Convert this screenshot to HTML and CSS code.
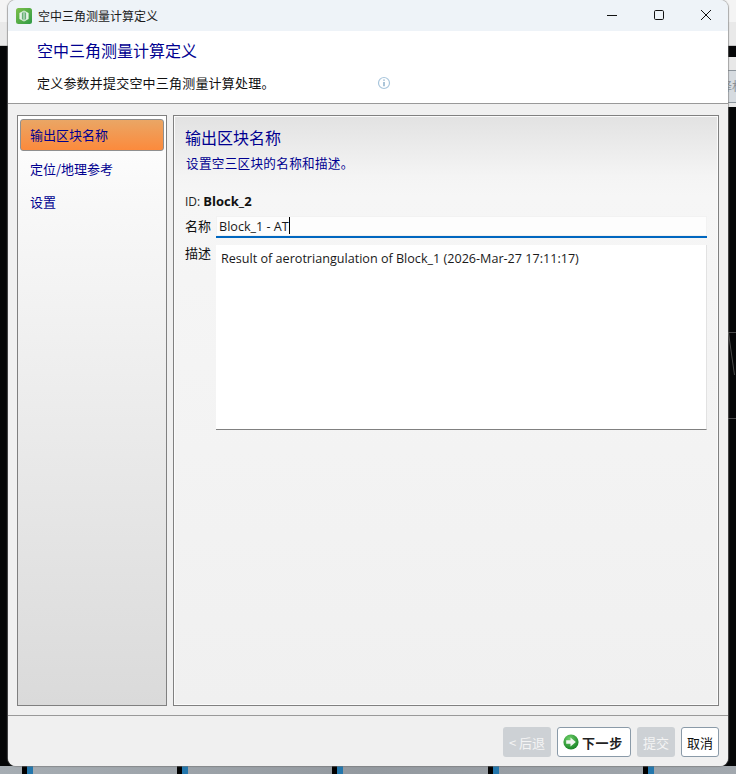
FILE: index.html
```html
<!DOCTYPE html>
<html lang="zh">
<head>
<meta charset="utf-8">
<title>空中三角测量计算定义</title>
<link rel="stylesheet" href="styles.css">
</head>
<body>
<div class="desk-top"></div>
<div class="desk-strip"></div>
<div class="desk-chip"><span>择材</span></div>
<svg class="desk-lines" viewBox="0 0 8 90" aria-hidden="true">
  <path d="M0 .5h8M.5 1 6.5 43M0 86.5h8" stroke="#4a4a4a" stroke-width="1" fill="none"/>
</svg>
<div class="desk-bottom">
  <i class="tick t1"></i><i class="tick t2"></i><i class="tick t3"></i><i class="tick t4"></i><i class="tick t5"></i>
</div>
<main class="window">
  <header class="titlebar">
    <svg class="app-icon" viewBox="0 0 16 16" aria-hidden="true">
      <defs><linearGradient id="g" x1="0" y1="0" x2="1" y2="1"><stop offset="0" stop-color="#7cc04a"/><stop offset="1" stop-color="#2f9a46"/></linearGradient></defs>
      <rect width="16" height="16" rx="2.5" fill="url(#g)"/>
      <path d="M8 2.4 12.6 5v6L8 13.6 3.4 11V5z" fill="#e6f2e6"/>
      <path d="M6.4 4.5v7M9.6 4.5v7M8 3.5v9" stroke="#5aa86a" stroke-width="1" fill="none"/>
    </svg>
    <span class="title-text">空中三角测量计算定义</span>
    <div class="win-controls">
      <svg viewBox="0 0 12 12" class="wc"><path d="M1 6.5h10" stroke="#111" stroke-width="1" fill="none"/></svg>
      <svg viewBox="0 0 12 12" class="wc"><rect x="1.5" y="1.5" width="9" height="9" rx="1.2" stroke="#111" stroke-width="1" fill="none"/></svg>
      <svg viewBox="0 0 12 12" class="wc"><path d="M1 1l10 10M11 1 1 11" stroke="#111" stroke-width="1" fill="none"/></svg>
    </div>
  </header>
  <section class="banner">
    <h1 class="banner-title">空中三角测量计算定义</h1>
    <div class="banner-row">
      <p class="banner-sub">定义参数并提交空中三角测量计算处理。</p>
      <svg class="info" viewBox="0 0 14 14" aria-hidden="true">
        <circle cx="7" cy="7" r="5.5" fill="#fff" stroke="#a9c6dc" stroke-width="1.2"/>
        <path d="M7 6v4.2M7 3.6v1.2" stroke="#7fa6c4" stroke-width="1.3"/>
      </svg>
    </div>
  </section>
  <section class="content">
    <nav class="side">
      <a class="side-item active">输出区块名称</a>
      <a class="side-item">定位/地理参考</a>
      <a class="side-item">设置</a>
    </nav>
    <div class="panel">
      <div class="panel-head">
        <h2 class="panel-title">输出区块名称</h2>
        <p class="panel-sub">设置空三区块的名称和描述。</p>
      </div>
      <div class="id-line">ID: <b>Block_2</b></div>
      <div class="field">
        <label class="field-label">名称</label>
        <div class="name-input">Block_1 - AT<span class="caret"></span></div>
      </div>
      <div class="field">
        <label class="field-label desc-label">描述</label>
        <div class="desc-input">Result of aerotriangulation of Block_1 (2026-Mar-27 17:11:17)</div>
      </div>
    </div>
  </section>
  <footer class="footer">
    <button class="btn disabled back">&lt; 后退</button>
    <button class="btn next">
      <svg class="next-icon" viewBox="0 0 16 16" aria-hidden="true">
        <defs><radialGradient id="n" cx=".4" cy=".3" r=".8"><stop offset="0" stop-color="#6fd06a"/><stop offset="1" stop-color="#0d7a1c"/></radialGradient></defs>
        <circle cx="8" cy="8" r="7.6" fill="url(#n)"/>
        <path d="M3.2 6.3h4.3V3.4L12.8 8l-5.3 4.6V9.7H3.2z" fill="#f2f6f2"/>
      </svg>
      <b>下一步</b>
    </button>
    <button class="btn disabled submit">提交</button>
    <button class="btn cancel">取消</button>
  </footer>
</main>
</body>
</html>
```

FILE: styles.css
```css
* { box-sizing: border-box; }
html, body { margin: 0; height: 774px; overflow: hidden; }
body {
  position: relative;
  width: 736px;
  background: #050607;
  font-family: "Open Sans", "Noto Sans CJK SC", sans-serif;
  font-size: 13px;
  color: #111;
}
.desk-top {
  position: absolute;
  left: 0; top: 0;
  width: 736px;
  height: 46px;
  background: linear-gradient(#f4f4f4 0, #f4f4f4 22px, #e9e9e9 22px);
  border-bottom: 1px solid #c4c4c4;
}
.desk-strip {
  position: absolute;
  left: 728px; top: 57px;
  width: 8px;
  height: 50px;
  background: #e8e8e8;
}
.desk-chip {
  position: absolute;
  left: 728px; top: 70px;
  width: 8px;
  height: 33px;
  background: #d6dbe0;
  border-top: 1px solid #8b949c;
  border-bottom: 1px solid #8b949c;
  overflow: hidden;
}
.desk-chip span {
  display: block;
  width: 24px;
  margin-left: -8px;
  color: #8a9097;
  font-family: "Noto Sans CJK SC", sans-serif;
  font-size: 12px;
  line-height: 30px;
}
.desk-lines {
  position: absolute;
  left: 728px; top: 332px;
  width: 8px;
  height: 90px;
}
.desk-bottom {
  position: absolute;
  left: 0; top: 766px;
  width: 736px;
  height: 8px;
  background: linear-gradient(90deg, #a6adb3, #93999f 50%, #a2a8ae);
}
.tick {
  position: absolute;
  top: 0;
  width: 11px;
  height: 8px;
  background: linear-gradient(90deg, #000 5px, #2377ad 5px);
}
.t1 { left: 22px; } .t2 { left: 177px; } .t3 { left: 332px; } .t4 { left: 488px; } .t5 { left: 643px; }

.window {
  position: relative;
  margin: 0 8px;
  width: 720px;
  height: 766px;
  display: flex;
  flex-direction: column;
  border-radius: 8px;
  background: #f0f0f0;
  overflow: hidden;
  box-shadow: 0 0 1px 1px rgba(120,120,120,.6);
}
.titlebar {
  flex: 0 0 31px;
  display: flex;
  align-items: center;
  padding-left: 8px;
  background: #eef3f8;
}
.app-icon { width: 16px; height: 16px; margin-right: 6px; }
.title-text {
  font-family: "Noto Sans CJK SC", sans-serif;
  font-size: 12px;
  color: #1a1a1a;
}
.win-controls {
  margin-left: auto;
  display: flex;
  gap: 35px;
  padding-right: 16px;
  padding-bottom: 1px;
}
.wc { width: 12px; height: 12px; display: block; }

.banner {
  flex: 0 0 73px;
  background: #fff;
  border-bottom: 1px solid #999;
  padding: 8px 0 0 29px;
}
.banner-title {
  margin: 0;
  font-family: "Noto Sans CJK SC", sans-serif;
  font-weight: 400;
  font-size: 16px;
  line-height: 22px;
  color: #000090;
}
.banner-row {
  display: flex;
  align-items: center;
  margin-top: 12px;
  height: 20px;
}
.banner-sub {
  margin: 0;
  width: 340px;
  font-family: "Noto Sans CJK SC", sans-serif;
  font-size: 13px;
  letter-spacing: .2px;
  line-height: 20px;
  color: #111;
}
.info { width: 14px; height: 14px; margin-top: 0; }

.content {
  flex: 0 0 612px;
  display: flex;
  gap: 6px;
  padding: 11px 9px 9px 9px;
  border-bottom: 1px solid #999;
  background: #f0f0f0;
}
.side {
  flex: 0 0 150px;
  border: 1px solid #808080;
  background: linear-gradient(#ffffff 0, #f8f8f8 15%, #dadada 100%);
  padding: 3px 2px;
  display: flex;
  flex-direction: column;
}
.side-item {
  height: 33px;
  padding-left: 10px;
  font-family: "Noto Sans CJK SC", sans-serif;
  font-size: 13px;
  line-height: 32px;
  color: #000090;
}
.side-item.active {
  height: 32px;
  margin-bottom: 2px;
  line-height: 30px;
  padding-left: 9px;
  border: 1px solid #8f8f8f;
  border-radius: 3px;
  background: linear-gradient(#eaa665, #fc8a3c);
}
.panel {
  flex: 1;
  border: 1px solid #808080;
  box-shadow: inset 0 0 0 1px #fbfbfb;
  background: linear-gradient(#e2e2e2 0, #f4f4f4 60px, #f6f6f6 80px, #f0f0f0 100%);
  padding: 0 11px 0 11px;
}
.panel-head { height: 75px; padding-top: 10px; }
.panel-title {
  margin: 0;
  font-family: "Noto Sans CJK SC", sans-serif;
  font-weight: 400;
  font-size: 16px;
  line-height: 22px;
  color: #000090;
}
.panel-sub {
  margin: 6px 0 0 1px;
  font-family: "Noto Sans CJK SC", sans-serif;
  font-size: 12.6px;
  letter-spacing: .3px;
  line-height: 18px;
  color: #000090;
}
.id-line { height: 25px; line-height: 20px; font-size: 12px; color: #222; }
.id-line b { color: #111; font-size: 13px; }
.field { display: flex; }
.field-label {
  flex: 0 0 31px;
  font-family: "Noto Sans CJK SC", sans-serif;
  font-size: 13px;
  line-height: 20px;
  color: #111;
}
.desc-label { line-height: 16px; }
.name-input {
  flex: 1;
  height: 22px;
  margin-bottom: 7px;
  padding-left: 3px;
  background: #fdfdfd;
  box-shadow: inset 0 0 0 1px #f2f2f2;
  border-bottom: 2px solid #0067c0;
  line-height: 22px;
  font-size: 12.6px;
  color: #1a1a1a;
}
.caret {
  display: inline-block;
  width: 1px;
  height: 17px;
  background: #000;
  vertical-align: -3px;
}
.desc-input {
  flex: 1;
  height: 185px;
  padding: 5px 5px;
  background: #fff;
  border-right: 1px solid #e2e2e2;
  border-bottom: 1px solid #808080;
  line-height: 18px;
  font-size: 12.6px;
  color: #1a1a1a;
}
.footer {
  flex: 1;
  display: flex;
  justify-content: flex-end;
  gap: 6px;
  padding: 11px 9px 0 0;
  background: #f0f0f0;
}
.btn {
  height: 30px;
  padding: 0;
  border: 1px solid #8a9aa8;
  border-radius: 3px;
  background: #fff;
  font-family: "Noto Sans CJK SC", sans-serif;
  font-size: 13px;
  color: #111;
  display: flex;
  align-items: center;
  justify-content: center;
}
.disabled { border: 0; background: #cdd1d5; color: #f4f4f4; }
.back { width: 48px; }
.next { width: 74px; justify-content: flex-start; padding-left: 5px; }
.next b { font-weight: 700; margin-left: 3px; letter-spacing: .6px; color: #222; }
.next-icon { width: 16px; height: 16px; }
.submit { width: 38px; }
.cancel { width: 38px; }
```
